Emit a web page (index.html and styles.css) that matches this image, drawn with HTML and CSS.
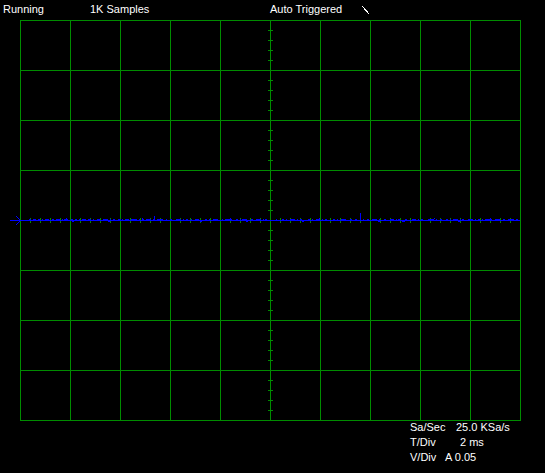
FILE: index.html
```html
<!DOCTYPE html>
<html>
<head>
<meta charset="utf-8">
<title>Scope</title>
<link rel="stylesheet" href="styles.css">
</head>
<body>
<div class="screen">
  <div class="status">
    <span class="st st-run">Running</span>
    <span class="st st-samples">1K Samples</span>
    <span class="st st-trig">Auto Triggered</span>
    <svg class="slope" width="8" height="9" viewBox="0 0 8 9" shape-rendering="crispEdges"><path d="M0.5 0.5 L7.5 8.5" stroke="#ffffff" stroke-width="1" fill="none"/></svg>
  </div>
  <svg class="plot" width="545" height="403" viewBox="0 17 545 403" shape-rendering="crispEdges">
    <path class="grid" d="M20.5 20 V421 M70.5 20 V421 M120.5 20 V421 M170.5 20 V421 M220.5 20 V421 M270.5 20 V421 M320.5 20 V421 M370.5 20 V421 M420.5 20 V421 M470.5 20 V421 M520.5 20 V421 M20 20.5 H521 M20 70.5 H521 M20 120.5 H521 M20 170.5 H521 M20 220.5 H521 M20 270.5 H521 M20 320.5 H521 M20 370.5 H521 M20 420.5 H521"/>
    <path class="grid" d="M268 30.5h5 M268 40.5h5 M268 50.5h5 M268 60.5h5 M268 80.5h5 M268 90.5h5 M268 100.5h5 M268 110.5h5 M268 130.5h5 M268 140.5h5 M268 150.5h5 M268 160.5h5 M268 180.5h5 M268 190.5h5 M268 200.5h5 M268 210.5h5 M268 230.5h5 M268 240.5h5 M268 250.5h5 M268 260.5h5 M268 280.5h5 M268 290.5h5 M268 300.5h5 M268 310.5h5 M268 330.5h5 M268 340.5h5 M268 350.5h5 M268 360.5h5 M268 380.5h5 M268 390.5h5 M268 400.5h5 M268 410.5h5"/>
    <path class="grid" d="M30.5 218v5 M40.5 218v5 M50.5 218v5 M60.5 218v5 M80.5 218v5 M90.5 218v5 M100.5 218v5 M110.5 218v5 M130.5 218v5 M140.5 218v5 M150.5 218v5 M160.5 218v5 M180.5 218v5 M190.5 218v5 M200.5 218v5 M210.5 218v5 M230.5 218v5 M240.5 218v5 M250.5 218v5 M260.5 218v5 M280.5 218v5 M290.5 218v5 M300.5 218v5 M310.5 218v5 M330.5 218v5 M340.5 218v5 M350.5 218v5 M360.5 218v5 M380.5 218v5 M390.5 218v5 M400.5 218v5 M410.5 218v5 M430.5 218v5 M440.5 218v5 M450.5 218v5 M460.5 218v5 M480.5 218v5 M490.5 218v5 M500.5 218v5 M510.5 218v5"/>
    <path class="trace" d="M10 220.5 H520"/>
    <path class="trace" d="M16.5 216 V217 M17.5 217 V218 M18.5 218 V219 M19.5 219 V220 M19.5 221 V222 M18.5 222 V223 M17.5 223 V224 M16.5 224 V225"/>
    <path class="trace" d="M29 219.5h2 M33 219.5h3 M38 219.5h2 M42 219.5h1 M45 219.5h4 M52 219.5h2 M56 219.5h4 M62 219.5h1 M64 219.5h4 M71 219.5h2 M75 219.5h2 M79 219.5h1 M82 219.5h4 M88 219.5h3 M93 219.5h1 M97 219.5h3 M103 219.5h5 M110 219.5h1 M113 219.5h2 M118 219.5h3 M122 219.5h1 M125 219.5h4 M131 219.5h6 M139 219.5h1 M142 219.5h2 M146 219.5h5 M153 219.5h1 M157 219.5h6 M166 219.5h1 M170 219.5h2 M176 219.5h5 M183 219.5h1 M186 219.5h2 M191 219.5h1 M195 219.5h4 M205 219.5h2 M209 219.5h1 M213 219.5h5 M222 219.5h1 M225 219.5h7 M236 219.5h2 M240 219.5h1 M242 219.5h5 M251 219.5h2 M256 219.5h5 M263 219.5h1 M265 219.5h2 M276 219.5h1 M282 219.5h2 M286 219.5h1 M290 219.5h5 M297 219.5h1 M300 219.5h2 M308 219.5h2 M312 219.5h1 M316 219.5h4 M322 219.5h1 M325 219.5h2 M333 219.5h2 M337 219.5h1 M341 219.5h5 M350 219.5h2 M355 219.5h2 M363 219.5h1 M367 219.5h2 M372 219.5h5 M379 219.5h1 M384 219.5h2 M390 219.5h4 M396 219.5h1 M398 219.5h2 M405 219.5h2 M412 219.5h4 M418 219.5h1 M421 219.5h2 M428 219.5h6 M436 219.5h1 M440 219.5h2 M446 219.5h2 M450 219.5h1 M453 219.5h5 M460 219.5h1 M462 219.5h2 M468 219.5h5 M475 219.5h1 M478 219.5h2 M482 219.5h1 M485 219.5h7 M495 219.5h5 M503 219.5h2 M508 219.5h6 M516 219.5h2"/>
    <path class="trace" d="M154.5 216 V220 M360.5 213 V220 M230.5 218 V219 M490.5 218 V219 M66.5 218 V219 M142.5 218 V219 M319.5 218 V219 M434.5 218 V219 M402 221.5h3 M200 221.5h2 M72 221.5h2 M108 221.5h2 M246 221.5h2 M302 221.5h2 M378 221.5h2 M458 221.5h2"/>
  </svg>
  <div class="info">
    <div class="row"><span class="lbl lbl-sa">Sa/Sec</span><span class="val">25.0 KSa/s</span></div>
    <div class="row"><span class="lbl lbl-t">T/Div</span><span class="val">2 ms</span></div>
    <div class="row"><span class="lbl lbl-v">V/Div</span><span class="val">A 0.05</span></div>
  </div>
</div>
</body>
</html>
```
FILE: styles.css
```css
html, body {
  margin: 0;
  padding: 0;
  background: #000000;
}
.screen {
  width: 545px;
  height: 473px;
  background: #000000;
  color: #ffffff;
  font-family: "Liberation Sans", Arial, sans-serif;
  font-size: 11px;
  overflow: hidden;
}
.status {
  display: flex;
  align-items: flex-start;
  height: 15px;
  padding-top: 2px;
  padding-left: 3px;
  line-height: 15px;
  white-space: nowrap;
}
.st {
  display: block;
}
.st-run { width: 87px; }
.st-samples { width: 180px; }
.st-trig { width: 92px; }
.slope {
  display: block;
  margin-top: 4px;
}
.plot {
  display: block;
  overflow: visible;
}
.grid {
  stroke: #008c00;
  stroke-width: 1;
  fill: none;
}
.trace {
  stroke: #0000ff;
  stroke-width: 1;
  fill: none;
}
.info {
  padding-left: 410px;
  line-height: 15px;
  white-space: nowrap;
}
.row {
  display: flex;
}
.lbl {
  display: block;
}
.lbl-sa { width: 46px; }
.lbl-t { width: 50px; }
.lbl-v { width: 35px; }
.val {
  display: block;
}
```
